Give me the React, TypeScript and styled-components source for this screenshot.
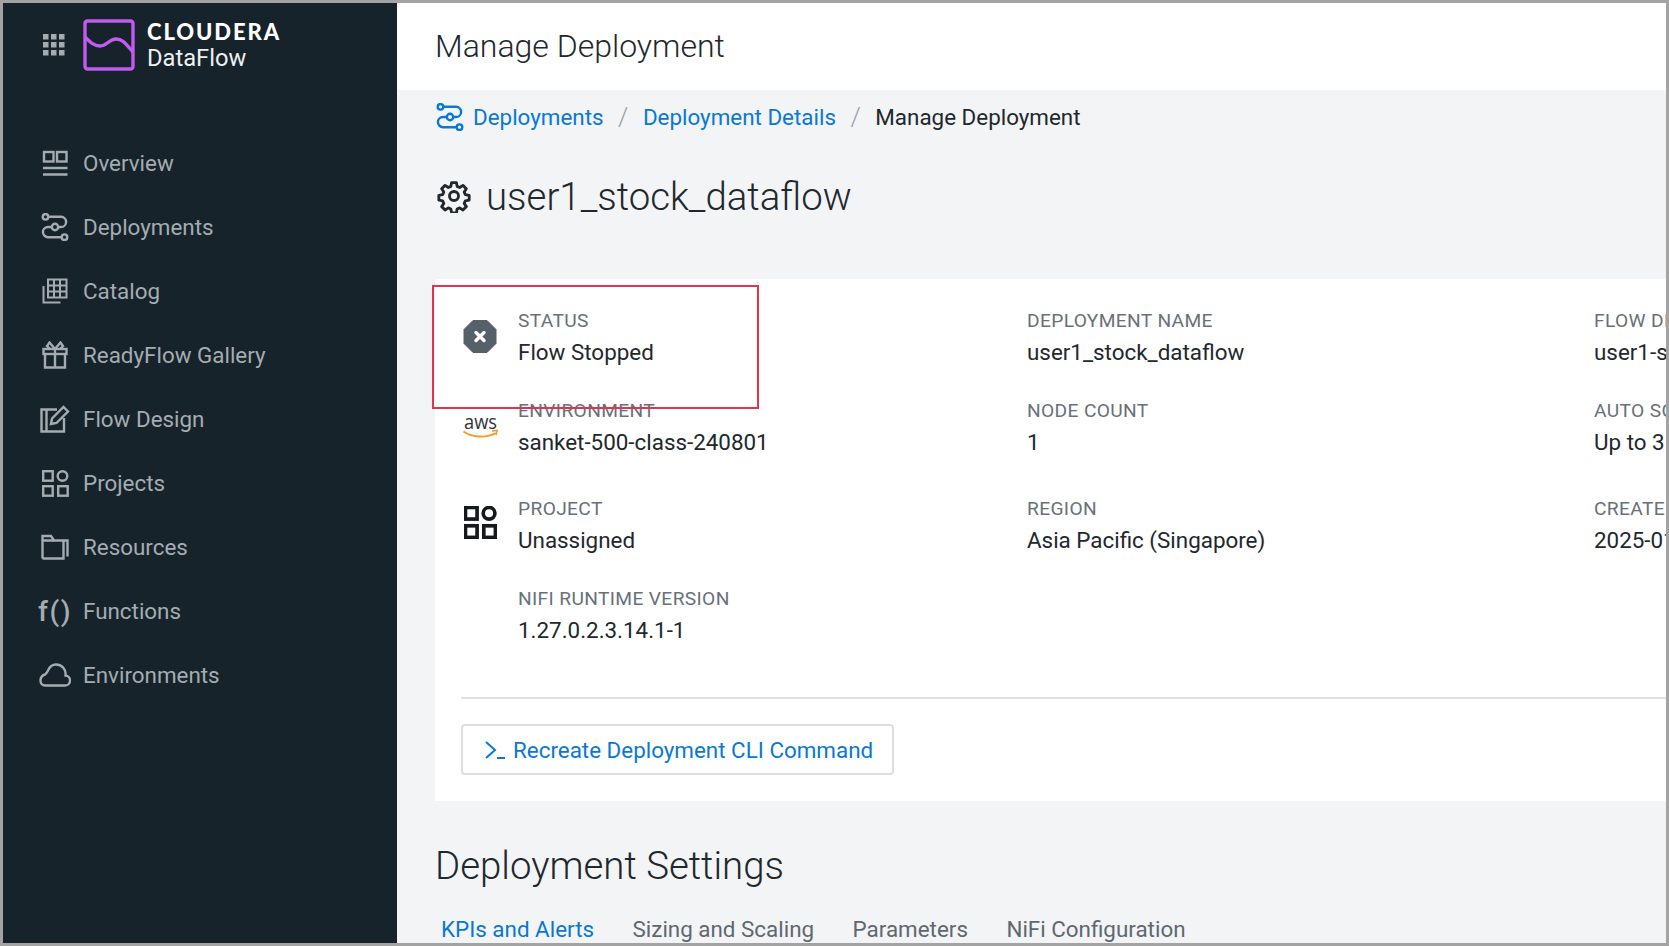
import { FC, ReactNode } from "react";
import styled, { createGlobalStyle } from "styled-components";

const GlobalStyle = createGlobalStyle`
  html, body {
    margin: 0;
    padding: 0;
    height: 100%;
    overflow: hidden;
    background: #fff;
    font-family: Roboto, "Liberation Sans", sans-serif;
  }
`;

const Frame = styled.div`
  position: relative;
  display: flex;
  box-sizing: border-box;
  width: 1669px;
  height: 946px;
  border: 3px solid #a3a3a3;
  overflow: hidden;
`;

const Sidebar = styled.nav`
  display: flex;
  flex-direction: column;
  flex: 0 0 394px;
  background: #16232b;
`;

const Brand = styled.div`
  display: flex;
  align-items: center;
  height: 84px;
  padding-left: 40px;
  gap: 18px;
`;

const BrandText = styled.div`
  display: flex;
  flex-direction: column;
  margin: 2px 0 0 -6px;
`;

const BrandName = styled.span`
  font-family: Lato, sans-serif;
  font-weight: 900;
  font-size: 22px;
  line-height: 24px;
  letter-spacing: 1.9px;
  color: #fff;
`;

const BrandProduct = styled.span`
  font-size: 23.7px;
  line-height: 28px;
  color: #eef0f1;
`;

const NavList = styled.div`
  display: flex;
  flex-direction: column;
  margin-top: 44px;
`;

const NavItem = styled.a`
  display: flex;
  align-items: center;
  height: 64px;
  padding-left: 34px;
  color: #a5acb1;
  font-size: 22.4px;
`;

const NavIcon = styled.span`
  display: flex;
  justify-content: center;
  align-items: center;
  width: 36px;
  height: 36px;
  margin-right: 10px;
  color: #a5acb1;
`;

const FnGlyph = styled.span`
  font-size: 28px;
  font-weight: 500;
  letter-spacing: 1.5px;
  white-space: nowrap;
`;

const Main = styled.main`
  display: flex;
  flex-direction: column;
  flex: 1;
  min-width: 0;
  background: #f3f4f6;
  overflow: hidden;
`;

const Header = styled.header`
  display: flex;
  align-items: center;
  flex: 0 0 87px;
  padding: 0 0 2px 38px;
  box-sizing: border-box;
  background: #fff;
`;

const PageTitle = styled.h1`
  margin: 0;
  font-weight: 300;
  font-size: 32px;
  color: #21282d;
`;

const Content = styled.div`
  display: flex;
  flex-direction: column;
  padding-left: 38px;
`;

const Breadcrumbs = styled.div`
  display: flex;
  align-items: center;
  height: 54px;
  padding-left: 1px;
  font-size: 22.4px;
`;

const Crumb = styled.a<{ $current?: boolean }>`
  color: ${(p) => (p.$current ? "#21282d" : "#0a78d6")};
  white-space: nowrap;
`;

const Slash = styled.span`
  margin: 0 14.5px;
  color: #9aa1a6;
  font-size: 26px;
  font-weight: 300;
`;

const CrumbIcon = styled.span`
  display: flex;
  margin-right: 9px;
  color: #0a78d6;
`;

const DeploymentTitle = styled.div`
  display: flex;
  align-items: center;
  height: 50px;
  margin-top: 27px;
  padding-left: 2px;
  gap: 15px;
  color: #21282d;
`;

const DeploymentName = styled.h2`
  margin: 0;
  font-weight: 300;
  font-size: 38.4px;
  white-space: nowrap;
`;

const Card = styled.section`
  display: flex;
  flex-direction: column;
  width: 1400px;
  height: 522px;
  margin-top: 58px;
  padding: 30px 0 0 26px;
  box-sizing: border-box;
  background: #fff;
  border-radius: 4px 0 0 0;
`;

const FieldGrid = styled.div`
  display: grid;
  grid-template-columns: 564px 567px 1fr;
  grid-template-rows: 90px 98px 90px 90px;
  padding-left: 2px;
`;

const Field = styled.div`
  display: flex;
  min-width: 0;
`;

const FieldIcon = styled.div`
  display: flex;
  justify-content: center;
  flex: 0 0 34px;
  margin-right: 21px;
  height: 34px;
  margin-top: 9px;
  color: #16191c;
`;

const FieldBody = styled.div<{ $indent?: boolean }>`
  display: flex;
  flex-direction: column;
  margin-left: ${(p) => (p.$indent ? "55px" : "0")};
  white-space: nowrap;
`;

const FieldLabel = styled.span`
  height: 24px;
  line-height: 24px;
  font-size: 19.2px;
  letter-spacing: 0.35px;
  text-transform: uppercase;
  color: #67717a;
`;

const FieldValue = styled.span`
  margin-top: 5px;
  height: 28px;
  line-height: 28px;
  font-size: 22.4px;
  color: #21282d;
`;

const Divider = styled.hr`
  width: 100%;
  height: 2px;
  margin: 20px 0 25px;
  border: 0;
  background: #dfe1e3;
`;

const CommandButton = styled.button`
  display: flex;
  align-items: center;
  align-self: flex-start;
  width: 433px;
  height: 51px;
  padding: 0 0 0 21px;
  gap: 7px;
  background: #fff;
  border: 2px solid #dcdee0;
  border-radius: 4px;
  color: #0a78d6;
  font-family: inherit;
  font-size: 22.4px;
  white-space: nowrap;
`;

const SectionTitle = styled.h2`
  margin: 40px 0 0;
  height: 50px;
  line-height: 50px;
  font-weight: 300;
  font-size: 38.4px;
  color: #21282d;
`;

const Tabs = styled.div`
  display: flex;
  margin-top: 24px;
  padding-left: 6px;
  gap: 38.5px;
`;

const Tab = styled.a<{ $active?: boolean }>`
  font-size: 22.4px;
  line-height: 28px;
  color: ${(p) => (p.$active ? "#0a78d6" : "#5e686f")};
  white-space: nowrap;
`;

const Highlight = styled.div`
  position: absolute;
  left: 429px;
  top: 282px;
  width: 327px;
  height: 124px;
  box-sizing: border-box;
  border: 2.5px solid #e2344e;
  pointer-events: none;
`;

const line = {
  fill: "none",
  stroke: "currentColor",
  strokeWidth: 2.4,
} as const;

const OverviewIcon = () => (
  <svg width="26" height="26" viewBox="0 0 26 26" {...line}>
    <rect x="2" y="2" width="9.500" height="9.500" />
    <rect x="15" y="2" width="9.500" height="9.500" />
    <path d="M1 18h24.500M1 24.500h24.500" />
  </svg>
);

const FlowIcon: FC = () => (
  <svg width="28" height="28" viewBox="0 0 28 28" {...line}>
    <circle cx="4.500" cy="3.800" r="2.800" />
    <circle cx="14" cy="14" r="3.200" />
    <circle cx="23.500" cy="24.200" r="2.800" />
    <path d="M7.300 3.800H20a5 5 0 0 1 0 10.200h-2.800M10.800 14H7a5 5 0 0 0 0 10.200h13.700" />
  </svg>
);

const CatalogIcon = () => (
  <svg width="26" height="26" viewBox="0 0 26 26" {...line} strokeWidth={2}>
    <rect x="6" y="1.500" width="18.500" height="18" />
    <path d="M12 1.500v18M18 1.500v18M6 7.500h18.500M6 13.500h18.500M1.500 8v16.500h17" />
  </svg>
);

const GiftIcon = () => (
  <svg width="26" height="28" viewBox="0 0 26 28" {...line}>
    <rect x="1.500" y="8" width="23" height="5" />
    <path d="M3 13v13.500h20V13M13 8v18.500M13 8 7.500 1.500 5 5l3 3M13 8l5.500-6.500L21 5l-3 3" />
  </svg>
);

const DesignIcon = () => (
  <svg width="30" height="28" viewBox="0 0 30 28" {...line}>
    <path d="M17 4.500H1.500V26.500H24V13M6.500 4.500V26.500" />
    <path d="M11 19l1-5.500L23.500 2l4.500 4.500L16.500 18z" />
  </svg>
);

const ProjectsIcon: FC<{ size?: number; weight?: number }> = ({ size = 27, weight = 2.4 }) => (
  <svg width={size} height={size} viewBox="0 0 27 27" {...line} strokeWidth={weight}>
    <rect x="1.200" y="1.200" width="9.500" height="9.500" />
    <circle cx="20.500" cy="6" r="4.800" />
    <rect x="1.200" y="16.200" width="9.500" height="9.500" />
    <rect x="16.200" y="16.200" width="9.500" height="9.500" />
  </svg>
);

const FolderIcon = () => (
  <svg width="28" height="26" viewBox="0 0 28 26" {...line}>
    <path d="M1.500 24.500V2h8.500l3 4.500h13.500v16" />
    <path d="M1.500 6.500h11.500M1.500 24.500h21V7" />
  </svg>
);

const CloudIcon = () => (
  <svg width="32" height="24" viewBox="0 0 32 24" {...line}>
    <path d="M6.500 22.500h19a5 5 0 0 0 1-10A9.500 9.500 0 0 0 17 1.500c-4 0-6.500 2.500-8 6-1 2-1.500 3-3 4-3 1-4.500 3-4.500 6 0 3 2 5 4.500 5z" />
  </svg>
);

const GridIcon = () => (
  <svg width="22" height="22" viewBox="0 0 22 22" fill="#a5acb1">
    {[0, 8, 16].map((y) =>
      [0, 8, 16].map((x) => <rect key={`${x}-${y}`} x={x} y={y} width="5.500" height="5.500" />)
    )}
  </svg>
);

const Logo = () => (
  <svg width="52" height="52" viewBox="0 0 52 52" fill="none" stroke="#c05cf0" strokeWidth="3.400">
    <rect x="2" y="2" width="48" height="48" rx="2.500" />
    <path d="M2 18c5 5 9 9 15 9 7 0 9-7 16-7 7 0 10 5 17 13" />
  </svg>
);

const GearIcon = () => (
  <svg width="34" height="34" viewBox="0 0 24 24" fill="none" stroke="currentColor" strokeWidth="2" strokeLinejoin="round">
    <circle cx="12" cy="12" r="3.200" />
    <path d="M10.300 2.500h3.400l.5 2.700 1.800.8 2.300-1.500 2.400 2.400-1.500 2.300.8 1.800 2.700.5v3.400l-2.700.5-.8 1.800 1.500 2.300-2.400 2.400-2.300-1.500-1.800.8-.5 2.700h-3.400l-.5-2.700-1.800-.8-2.300 1.500-2.400-2.400 1.500-2.300-.8-1.800-2.700-.5v-3.400l2.700-.5.8-1.800-1.500-2.300 2.400-2.400 2.300 1.500 1.800-.8z" />
  </svg>
);

const StoppedIcon = () => (
  <svg width="34" height="34" viewBox="0 -1.500 34 34" overflow="visible">
    <path d="M10 1h14l9 9v14l-9 9H10l-9-9V10z" fill="#566069" stroke="#566069" strokeLinejoin="round" />
    <path d="M13 13l8 8M21 13l-8 8" stroke="#fff" strokeWidth="3.400" strokeLinecap="round" />
  </svg>
);

const AwsText = styled.text`
  font-family: "Open Sans", sans-serif;
  font-size: 20px;
  font-weight: 500;
  fill: #2b3338;
`;

const AwsIcon = () => (
  <svg width="34" height="34" viewBox="0 0 34 34" overflow="visible">
    <AwsText x="1" y="20.500" textLength="33" lengthAdjust="spacingAndGlyphs">aws</AwsText>
    <path d="M0.500 23.500c9 6 23 7 32 1.500" fill="none" stroke="#f5991f" strokeWidth="2" />
    <path d="M29 23l5-.5-1 4.500" fill="none" stroke="#f5991f" strokeWidth="1.600" />
  </svg>
);

const TerminalIcon = () => (
  <svg width="22" height="20" viewBox="0 0 22 20" fill="none" stroke="currentColor" strokeWidth="2">
    <path d="M2 2l9 8-9 8M13 18h8" />
  </svg>
);

const navItems: { label: string; icon: ReactNode }[] = [
  { label: "Overview", icon: <OverviewIcon /> },
  { label: "Deployments", icon: <FlowIcon /> },
  { label: "Catalog", icon: <CatalogIcon /> },
  { label: "ReadyFlow Gallery", icon: <GiftIcon /> },
  { label: "Flow Design", icon: <DesignIcon /> },
  { label: "Projects", icon: <ProjectsIcon /> },
  { label: "Resources", icon: <FolderIcon /> },
  { label: "Functions", icon: <FnGlyph>f()</FnGlyph> },
  { label: "Environments", icon: <CloudIcon /> },
];

const fields: { label: string; value: string; icon?: ReactNode; indent?: boolean }[] = [
  { label: "Status", value: "Flow Stopped", icon: <StoppedIcon /> },
  { label: "Deployment Name", value: "user1_stock_dataflow" },
  { label: "Flow Definition", value: "user1-stock_dataflow" },
  { label: "Environment", value: "sanket-500-class-240801", icon: <AwsIcon /> },
  { label: "Node Count", value: "1" },
  { label: "Auto Scaling", value: "Up to 3 nodes" },
  { label: "Project", value: "Unassigned", icon: <ProjectsIcon size={33} weight={3} /> },
  { label: "Region", value: "Asia Pacific (Singapore)" },
  { label: "Created", value: "2025-01-15" },
  { label: "NiFi Runtime Version", value: "1.27.0.2.3.14.1-1", indent: true },
];

export default function App() {
  return (
    <>
      <GlobalStyle />
      <Frame>
        <Sidebar>
          <Brand>
            <GridIcon />
            <Logo />
            <BrandText>
              <BrandName>CLOUDERA</BrandName>
              <BrandProduct>DataFlow</BrandProduct>
            </BrandText>
          </Brand>
          <NavList>
            {navItems.map((item) => (
              <NavItem key={item.label}>
                <NavIcon>{item.icon}</NavIcon>
                {item.label}
              </NavItem>
            ))}
          </NavList>
        </Sidebar>
        <Main>
          <Header>
            <PageTitle>Manage Deployment</PageTitle>
          </Header>
          <Content>
            <Breadcrumbs>
              <CrumbIcon>
                <FlowIcon />
              </CrumbIcon>
              <Crumb>Deployments</Crumb>
              <Slash>/</Slash>
              <Crumb>Deployment Details</Crumb>
              <Slash>/</Slash>
              <Crumb $current>Manage Deployment</Crumb>
            </Breadcrumbs>
            <DeploymentTitle>
              <GearIcon />
              <DeploymentName>user1_stock_dataflow</DeploymentName>
            </DeploymentTitle>
            <Card>
              <FieldGrid>
                {fields.map((field) => (
                  <Field key={field.label}>
                    {field.icon && <FieldIcon>{field.icon}</FieldIcon>}
                    <FieldBody $indent={field.indent}>
                      <FieldLabel>{field.label}</FieldLabel>
                      <FieldValue>{field.value}</FieldValue>
                    </FieldBody>
                  </Field>
                ))}
              </FieldGrid>
              <Divider />
              <CommandButton>
                <TerminalIcon />
                Recreate Deployment CLI Command
              </CommandButton>
            </Card>
            <SectionTitle>Deployment Settings</SectionTitle>
            <Tabs>
              <Tab $active>KPIs and Alerts</Tab>
              <Tab>Sizing and Scaling</Tab>
              <Tab>Parameters</Tab>
              <Tab>NiFi Configuration</Tab>
            </Tabs>
          </Content>
        </Main>
        <Highlight />
      </Frame>
    </>
  );
}
